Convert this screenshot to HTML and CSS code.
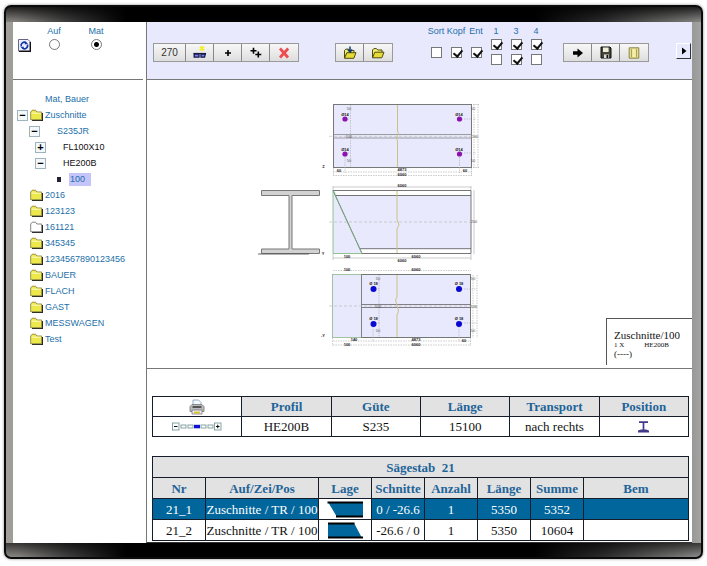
FILE: index.html
```html
<!DOCTYPE html>
<html lang="de">
<head>
<meta charset="utf-8">
<title>Zuschnitte</title>
<link rel="stylesheet" href="styles.css">
</head>
<body>
<svg class="defs" aria-hidden="true">
  <symbol id="folder" viewBox="0 0 13 12">
    <path d="M2 11.5H12.5V4" fill="none" stroke="#222" stroke-width="1.4"/>
    <path d="M.7 10.7V3L2.2 1.2H5.5L7 3H11.6V10.7Z" fill="#eee94a" stroke="#8b8740" stroke-width=".9"/>
    <path d="M1.6 4.2H10.8" stroke="#fbfac8" stroke-width="1"/>
  </symbol>
  <symbol id="folder-empty" viewBox="0 0 13 12">
    <path d="M2 11.5H12.5V4" fill="none" stroke="#222" stroke-width="1.2"/>
    <path d="M.7 10.7V3L2.2 1.2H5.5L7 3H11.6V10.7Z" fill="#fff" stroke="#777" stroke-width=".9"/>
  </symbol>
  <symbol id="open-folder" viewBox="0 0 14 12">
    <path d="M1.5 10.5V3L2.8 1.6H5.5L6.8 3H11V5" fill="#f3ee70" stroke="#4f4a10"/>
    <path d="M1.5 10.8 3.8 5.2H13L10.8 10.8Z" fill="#e6dc35" stroke="#4f4a10"/>
  </symbol>
</svg>
<div class="monitor">
  <div class="screen">
    <header class="mode">
      <button class="refresh" aria-label="Aktualisieren">
        <svg width="13" height="13" viewBox="0 0 13 13"><path d="M.5.5H10L12 2.5V12H.5Z" fill="#eef1ff" stroke="#668"/><path d="M1 12.4H12.4V3" fill="none" stroke="#111" stroke-width="1.2"/><path d="M3.2 7.5A3.3 3.3 0 0 1 8.2 3.8M9.4 5.4A3.3 3.3 0 0 1 4.4 9.2" fill="none" stroke="#1234a8" stroke-width="1.6"/><path d="M7 2.3 10 4.8 6.8 5.5ZM5.6 10.6 2.6 8.2 5.8 7.4Z" fill="#1234a8"/></svg>
      </button>
      <label class="pick">Auf<input type="radio" name="mode"></label>
      <label class="pick">Mat<input type="radio" name="mode" checked></label>
    </header>

    <div class="toolbar">
      <div class="group edit">
        <button class="angle">270</button>
        <button aria-label="Ansicht"><svg width="14" height="14" viewBox="0 0 14 14"><path d="M9 0V5M6.8 1 11.2 4M11.2 1 6.8 4" stroke="#f2ee30" stroke-width="1.6"/><path d="M.5 7.5H13" stroke="#223" stroke-width="1.2"/><path d="M1.2 8H6V11.2H1.2ZM8 8H12.4L11.5 11.2H8Z" fill="#7785e8" stroke="#181850" stroke-width="1.3"/></svg></button>
        <button aria-label="Hinzufügen"><svg width="14" height="14" viewBox="0 0 14 14"><path d="M7 4V10M4 7H10" stroke="#000" stroke-width="1.6"/></svg></button>
        <button aria-label="Mehrere hinzufügen"><svg width="14" height="14" viewBox="0 0 14 14"><path d="M4.5 1.8V7.8M1.5 4.8H7.5M9.3 5.5V11.5M6.3 8.5H12.3" stroke="#000" stroke-width="1.6"/></svg></button>
        <button aria-label="Löschen"><svg width="14" height="14" viewBox="0 0 14 14"><path d="M3 2.5 11 11.5M11.2 2.5 3 11.5" stroke="#ee4a50" stroke-width="2.7"/></svg></button>
      </div>
      <div class="group files">
        <button aria-label="Importieren"><svg width="14" height="14" viewBox="0 -1 14 13"><use href="#open-folder" width="14" height="12"/><path d="M7-1V4M4.8 2 7 4.6 9.2 2" fill="none" stroke="#16386a" stroke-width="1.5"/></svg></button>
        <button aria-label="Öffnen"><svg width="14" height="12"><use href="#open-folder"/></svg></button>
      </div>
      <div class="checks">
        <label>Sort<input class="mid" type="checkbox"></label>
        <label>Kopf<input class="mid" type="checkbox" checked></label>
        <label>Ent<input class="mid" type="checkbox" checked></label>
        <div class="pair"><label>1<input type="checkbox" checked></label><input type="checkbox" aria-label="1 unten"></div>
        <div class="pair"><label>3<input type="checkbox" checked></label><input type="checkbox" aria-label="3 unten" checked></div>
        <div class="pair"><label>4<input type="checkbox" checked></label><input type="checkbox" aria-label="4 unten"></div>
      </div>
      <div class="group store">
        <button aria-label="Weiter"><svg width="12" height="12" viewBox="0 0 12 12"><path d="M1 4.2H5.5V1.5L11 6 5.5 10.5V7.8H1Z" fill="#000"/></svg></button>
        <button aria-label="Speichern"><svg width="12" height="13" viewBox="0 0 12 13"><path d="M1 1H10L11 2V12H1Z" fill="#45453a" stroke="#111"/><path d="M3 1.5H8.6V6H3Z" fill="#eeeeda"/><path d="M4 8.5H9V12H4Z" fill="#ddd"/><path d="M6.5 9H8.3V12H6.5Z" fill="#111"/></svg></button>
        <button aria-label="Liste"><svg width="12" height="12" viewBox="0 0 12 12"><path d="M1.2.8H10.8V11.2H1.2Z" fill="#e7e08a" stroke="#8a8448"/><path d="M3.5 2V10M8.5 2V10" stroke="#aaa35a"/><path d="M4.5 3H7.5M4.5 5H7.5M4.5 7H7.5M4.5 9H7.5" stroke="#fffbd0"/></svg></button>
      </div>
      <button class="next" aria-label="Nächste"><svg width="6" height="8" viewBox="0 0 6 8"><path d="M1 .5 5.5 4 1 7.5Z" fill="#000"/></svg></button>
    </div>

    <nav class="tree">
      <ul>
        <li class="l1"><i class="gap"></i><i class="gap wide"></i><a href="#">Mat, Bauer</a></li>
        <li class="l1"><button class="toggle" aria-label="Zuklappen">−</button><svg class="folder"><use href="#folder"/></svg><a href="#">Zuschnitte</a></li>
        <li class="l2"><button class="toggle" aria-label="Zuklappen">−</button><a href="#">S235JR</a></li>
        <li class="l3"><button class="toggle plus" aria-label="Aufklappen">+</button><a class="dark" href="#">FL100X10</a></li>
        <li class="l3"><button class="toggle" aria-label="Zuklappen">−</button><a class="dark" href="#">HE200B</a></li>
        <li class="l4"><i class="dot"></i><a class="current" href="#">100</a></li>
        <li class="l1"><i class="gap"></i><svg class="folder"><use href="#folder"/></svg><a href="#">2016</a></li>
        <li class="l1"><i class="gap"></i><svg class="folder"><use href="#folder"/></svg><a href="#">123123</a></li>
        <li class="l1"><i class="gap"></i><svg class="folder"><use href="#folder-empty"/></svg><a href="#">161121</a></li>
        <li class="l1"><i class="gap"></i><svg class="folder"><use href="#folder"/></svg><a href="#">345345</a></li>
        <li class="l1"><i class="gap"></i><svg class="folder"><use href="#folder"/></svg><a href="#">1234567890123456</a></li>
        <li class="l1"><i class="gap"></i><svg class="folder"><use href="#folder"/></svg><a href="#">BAUER</a></li>
        <li class="l1"><i class="gap"></i><svg class="folder"><use href="#folder"/></svg><a href="#">FLACH</a></li>
        <li class="l1"><i class="gap"></i><svg class="folder"><use href="#folder"/></svg><a href="#">GAST</a></li>
        <li class="l1"><i class="gap"></i><svg class="folder"><use href="#folder"/></svg><a href="#">MESSWAGEN</a></li>
        <li class="l1"><i class="gap"></i><svg class="folder"><use href="#folder"/></svg><a href="#">Test</a></li>
      </ul>
    </nav>

    <main class="drawing">
      <svg class="plan" viewBox="147 80 545 286" role="img" aria-label="Profil HE200B, drei Ansichten">
        <!-- top view -->
        <rect x="333.500" y="104.500" width="138" height="63" fill="#e9e9fe" stroke="#777"/>
        <path d="M333 134.500H472M333 138H472" stroke="#888" stroke-width=".8"/>
        <path d="M329 136.300H476" stroke="#bbb" stroke-width=".6" stroke-dasharray="3 2"/>
        <path d="M350.500 105V167M473 104.500H479M473 119H476M473 153H476M473 167.500H479M474 104V168M478 104V168M333.500 168V176M471.500 168V176M345 157V173M459.500 157V173M333 172H472M333 175.500H472M459 119H471M345 119H350M345 153H350M459 153H471" fill="none" stroke="#aaa" stroke-width=".6" stroke-dasharray="1.500 1"/>
        <path d="M397.500 105V131L398.500 134 396.500 138 397.500 141V167" fill="none" stroke="#c9c283"/>
        <g fill="#8c12b0"><circle cx="345" cy="119" r="2.600"/><circle cx="459.500" cy="119" r="2.600"/><circle cx="345" cy="154" r="2.600"/><circle cx="459.500" cy="154" r="2.600"/></g>
        <g class="dim bold"><text x="345" y="116">Ø14</text><text x="459" y="116">Ø14</text><text x="345" y="151">Ø14</text><text x="459" y="151">Ø14</text><text x="339" y="172">60</text><text x="402" y="171">4873</text><text x="402" y="176">6060</text><text x="465" y="172">60</text><text x="323.500" y="168">Z</text></g>
        <g class="dim"><text x="349" y="110">50</text><text x="349" y="137.500">100</text><text x="349" y="162">50</text><text x="473" y="110">50</text><text x="475" y="137.500">100</text><text x="473" y="162">50</text></g>
        <!-- cross-section -->
        <path d="M261.500 190.500H319.500V195.500H292V249H319.500V253.500H261.500V249H289V195.500H261.500Z" fill="#d2d2d2" stroke="#777"/>
        <path d="M258 254H309" stroke="#444" stroke-width=".8"/>
        <!-- side view -->
        <path d="M333 190.500H471V253.500H333Z" fill="#e9e9fe"/>
        <path d="M335 191H470.500V195H337ZM360 249H470.500V253H362Z" fill="#fff"/>
        <path d="M333 190.500H471V253.500H362L333 190.500M336 195.500H471M360 248.700H471" fill="none" stroke="#555" stroke-width=".8"/>
        <path d="M362 253.500H333V190.500L362 253.500" fill="none" stroke="#79b579" stroke-width=".8"/>
        <path d="M329 222H475" stroke="#bbb" stroke-width=".7" stroke-dasharray="3 2"/>
        <path d="M397 191V219L399 225 397 229V253" fill="none" stroke="#c9c283"/>
        <path d="M333 187H471M333 186V190M471 186V190M474 190V254M333 258H471M333 254V260M471 254V260" stroke="#aaa" stroke-width=".6"/>
        <g class="dim bold"><text x="402" y="186.500">6060</text><text x="347" y="258">100</text><text x="416" y="258">6060</text><text x="402" y="262">6060</text><text x="323" y="255">Y</text></g>
        <g class="dim"><text x="474" y="223">200</text></g>
        <!-- bottom view -->
        <rect x="332.500" y="274.500" width="138" height="63" fill="#e9e9fe" stroke="#8db68d" stroke-width=".8"/>
        <path d="M361.500 274.500H470.500V337.500H361.500ZM361.500 304.500H471M361.500 307.500H471" fill="none" stroke="#666" stroke-width=".8"/>
        <path d="M329 306H476" stroke="#bbb" stroke-width=".7" stroke-dasharray="3 2"/>
        <path d="M397 275V297L395.500 300 398.500 311 397 315V337" fill="none" stroke="#c9c283"/>
        <path d="M379 275V337M473 275V338M477 275V338M332.500 338V346M470.500 338V346M373 324V342M459 324V342M333 341H471M333 345H471M333 270.500H471M373 289H380M373 323H380M459 289H477M459 323H477" stroke="#aaa" stroke-width=".6" stroke-dasharray="1.500 1"/>
        <g fill="#0808d2"><circle cx="373.500" cy="289" r="3"/><circle cx="459" cy="289" r="3"/><circle cx="373.500" cy="324" r="3"/><circle cx="459" cy="324" r="3"/></g>
        <g class="dim bold"><text x="373.500" y="285">Ø 18</text><text x="459" y="285">Ø 18</text><text x="373.500" y="320">Ø 18</text><text x="459" y="320">Ø 18</text><text x="347" y="270.500">100</text><text x="416" y="270.500">6060</text><text x="354" y="341">140</text><text x="347" y="346">100</text><text x="416" y="341">4873</text><text x="416" y="346">6060</text><text x="464" y="342">60</text><text x="323" y="337">-Y</text></g>
        <g class="dim"><text x="378" y="280">50</text><text x="378" y="307.500">100</text><text x="378" y="332">50</text><text x="473" y="280">50</text><text x="474" y="307.500">100</text><text x="473" y="332">50</text></g>
      </svg>
      <div class="caption">
        <strong>Zuschnitte/100</strong>
        <span><b>1 X</b><b>HE200B</b></span>
        <span class="dashes">(----)</span>
      </div>
    </main>

    <section class="lists">
      <table class="head">
        <tr><td class="print"><button aria-label="Drucken"><svg width="16" height="16" viewBox="0 0 16 16"><path d="M4 6V1H9.500L12 3.500V6" fill="#f4f8ff" stroke="#8ea2bd" stroke-width=".9"/><path d="M1 7.500 3 5.500H13L15 7.500V12.500H1Z" fill="#b7b9bc" stroke="#777" stroke-width=".8"/><path d="M3.500 8H12.500" stroke="#333" stroke-width="1.500"/><path d="M3 11H13V15H3Z" fill="#eee" stroke="#777" stroke-width=".8"/><path d="M5 13.500H11" stroke="#d9c22e" stroke-width="1.800"/></svg></button></td><th>Profil</th><th>Güte</th><th>Länge</th><th>Transport</th><th>Position</th></tr>
        <tr><td><svg class="slider" width="50" height="9" viewBox="0 0 50 9"><g fill="#fff" stroke="#7d9a9d" stroke-width=".9"><rect x=".5" y="1" width="6.500" height="7"/><rect x="42.500" y="1" width="6.500" height="7"/><rect x="9" y="3" width="5" height="3"/><rect x="16" y="3" width="5" height="3"/><rect x="29" y="3" width="5" height="3"/><rect x="36" y="3" width="5" height="3"/></g><rect x="22" y="2.800" width="6" height="3.500" fill="#1010d0"/><path d="M2 4.500H5.500M44 4.500H47.500M45.750 2.700V6.300" stroke="#111"/></svg></td><td>HE200B</td><td>S235</td><td>15100</td><td>nach rechts</td><td><svg width="11" height="12" viewBox="0 0 11 12"><path d="M1 1.200H10M5.500 1V10" stroke="#41398a" stroke-width="1.700"/><path d="M0 11.500V9.500L3 8.500H8L11 9.500V11.500Z" fill="#41398a"/></svg></td></tr>
      </table>
      <table class="bars">
        <colgroup><col class="c10"><col class="c21"><col class="c10"><col class="c10"><col class="c10"><col class="c10"><col class="c10"><col></colgroup>
        <tr><th colspan="8">Sägestab&nbsp; 21</th></tr>
        <tr><th>Nr</th><th>Auf/Zei/Pos</th><th>Lage</th><th>Schnitte</th><th>Anzahl</th><th>Länge</th><th>Summe</th><th>Bem</th></tr>
        <tr class="selected"><td>21_1</td><td>Zuschnitte / TR / 100</td><td class="shape"><svg width="37" height="17" viewBox="0 0 37 17"><path d="M1 1H36V16H10Z" fill="#00669c"/><path d="M.5 1.500H36M9 15.500H36" stroke="#000" stroke-width="2"/></svg></td><td>0 / -26.6</td><td>1</td><td>5350</td><td>5352</td><td></td></tr>
        <tr><td>21_2</td><td>Zuschnitte / TR / 100</td><td class="shape"><svg width="37" height="17" viewBox="0 0 37 17"><path d="M1 1H27L35 16H1Z" fill="#00669c"/><path d="M1 1.500H27.500M1 15.500H36" stroke="#000" stroke-width="2"/></svg></td><td>-26.6 / 0</td><td>1</td><td>5350</td><td>10604</td><td></td></tr>
      </table>
    </section>
  </div>
</div>
</body>
</html>
```
FILE: styles.css
```css
* { box-sizing: border-box; }

body {
  margin: 0;
  min-height: 100vh;
  padding: 5px 4px 7px;
  display: flex;
  background: #fff;
  color: #111;
  font-family: "Liberation Sans", Arial, sans-serif;
  font-size: 9px;
}

button { margin: 0; padding: 0; border: 0; background: none; font: inherit; color: inherit; }
svg { display: block; }
.defs { position: absolute; width: 0; height: 0; }

.monitor {
  flex: 1;
  display: flex;
  padding: 15px 9px 14px 7px;
  border: 2px solid #0b0b0b;
  border-radius: 7px;
  background:
    linear-gradient(180deg, #000c 0, #0003 14px) top / 100% 15px no-repeat,
    linear-gradient(0deg, #0002 0, #000a 14px) bottom / 100% 14px no-repeat,
    linear-gradient(90deg, #a3a09b 0, #9c9995 12px, #4a4a4a 60px, #000 120px, #000 76%, #333 86%, #8a8a88 97%, #a3a3a3 100%);
  box-shadow: 0 0 3px #888;
}

.screen {
  flex: 1;
  display: grid;
  grid-template-columns: 133px 1fr;
  grid-template-rows: 58px auto 1fr;
  background: #fff;
}

.mode { display: flex; align-items: flex-start; padding: 4px 0 0 5px; border-bottom: 1px solid #777; margin-right: 3px; }
.refresh { margin-top: 13px; }
.pick { width: 42px; display: flex; flex-direction: column; align-items: center; gap: 2px; color: #236fa8; line-height: 11px; }
.refresh + .pick { margin-left: 2px; }

input { appearance: none; margin: 0; width: 11px; height: 11px; background: #fff; border: 1px solid #777; }
input[type="radio"] { border-radius: 50%; }
input[type="radio"]:checked { background: radial-gradient(circle, #000 0 2px, #fff 3px); }
input[type="checkbox"]:checked { position: relative; }
input[type="checkbox"]:checked::after {
  content: "";
  position: absolute;
  left: 3px;
  top: 0;
  width: 4px;
  height: 7px;
  border: solid #111;
  border-width: 0 2px 2px 0;
  transform: rotate(40deg);
}

.toolbar {
  display: flex;
  align-items: flex-start;
  padding: 4px 1px 0 6px;
  border-left: 1px solid #777;
  border-bottom: 1px solid #777;
  background: #e9e9fe;
}
.group { display: flex; margin-top: 17px; border: 1px solid #9a9a9a; }
.group button {
  width: 28px;
  height: 17px;
  display: grid;
  place-items: center;
  background: linear-gradient(#f7f7f7, #dedede);
  border-right: 1px solid #888;
}
.group button:last-child { border-right: 0; }
.group .angle { width: 32px; font-size: 10px; color: #333; }
.files { margin-left: 36px; }
.checks { display: flex; margin-left: 33px; color: #236fa8; line-height: 11px; }
.checks > * { width: 20px; white-space: nowrap; }
.checks label { display: flex; flex-direction: column; align-items: center; gap: 2px; }
.checks .mid { margin-top: 8px; }
.pair { display: flex; flex-direction: column; align-items: center; gap: 4px; }
.store { margin-left: 17px; }
.next {
  margin: 17px 0 0 auto;
  width: 15px;
  height: 16px;
  display: grid;
  place-items: center;
  border: 1px solid #fff;
  border-right-color: #333;
  border-bottom-color: #333;
}

.tree { grid-row: 2 / 4; padding-top: 11px; }
.tree ul { list-style: none; margin: 0; padding: 0; }
.tree li { display: flex; align-items: center; height: 16px; }
.tree a { color: #236fa8; text-decoration: none; white-space: nowrap; }
.tree .dark { color: #111; }
.l1 { padding-left: 4px; }
.l2 { padding-left: 16px; }
.l3 { padding-left: 22px; }
.l4 { padding-left: 44px; }
.toggle {
  width: 11px;
  height: 11px;
  border: 1px solid #9db4bf;
  background: #f4f8fa;
  color: #000;
  font-size: 11px;
  font-weight: bold;
  line-height: 9px;
}
.l1 .toggle, .gap { width: 11px; margin-right: 2px; }
.wide { width: 13px; }
.folder { width: 13px; height: 12px; margin-right: 2px; }
.l2 a, .l3 a { margin-left: 17px; }
.dot { width: 4px; height: 5px; background: #223; margin-right: 8px; }
.tree .current { width: 22px; line-height: 13px; background: #c5c5fb; padding-left: 1px; }

.drawing { position: relative; border-left: 1px solid #777; border-bottom: 1px solid #777; padding-bottom: 2px; }
.plan { width: 100%; height: auto; }
.dim { font: 4px "Liberation Sans", sans-serif; text-anchor: middle; fill: #555; }
.bold { font-weight: bold; fill: #222; }
.caption {
  position: absolute;
  right: 0;
  bottom: 3px;
  width: 86px;
  height: 47px;
  padding: 10px 0 0 7px;
  display: flex;
  flex-direction: column;
  border: solid #555;
  border-width: 1px 0 0 1px;
  background: #fff;
  font-family: "Liberation Serif", serif;
  font-size: 7px;
  line-height: 9px;
}
.caption strong { font-size: 11px; line-height: 12px; font-weight: normal; }
.caption span { display: flex; gap: 20px; }
.caption b { font-weight: normal; }
.caption .dashes { font-size: 9px; }

.lists { padding: 27px 3px 1px 5px; border-left: 1px solid #777; border-bottom: 1px solid #333; }
table {
  width: 100%;
  table-layout: fixed;
  border-collapse: collapse;
  font-family: "Liberation Serif", "Times New Roman", serif;
  font-size: 13px;
  line-height: 15px;
}
th, td { padding: 0; border: 1px solid #151d2b; text-align: center; white-space: nowrap; vertical-align: middle; }
th { background: #e2e2e2; color: #1f6499; }
td svg { margin: 0 auto; }
.print button { display: block; margin: 0 auto; }
.head tr { height: 20px; }
.bars { margin-top: 19px; }
.bars tr { height: 21px; }
.c10 { width: 53px; }
.c21 { width: 113px; }
.selected td { background: #00669c; color: #fff; }
.selected .shape { background: #fff; }
```
